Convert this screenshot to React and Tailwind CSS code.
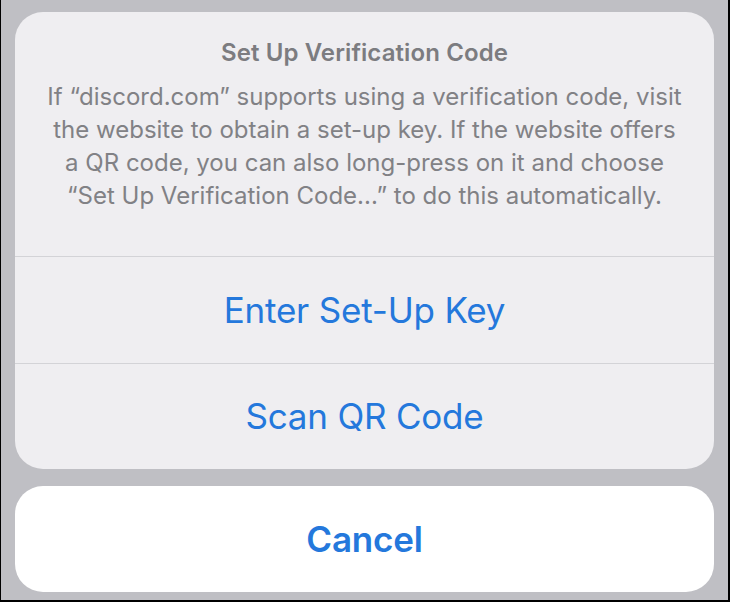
export default function App() {
  const font = { fontFamily: '"Inter", "Roboto", "Liberation Sans", sans-serif' };
  return (
    <div
      className="w-[730px] h-[602px] bg-[#bfbfc4] border-l border-r-2 border-b-2 border-black box-border pl-[14px] pr-[14px] pt-[12px] flex flex-col gap-[17px]"
      style={font}
    >
      <div className="w-[699px] bg-[#efeef1] rounded-[28px] flex flex-col overflow-hidden">
        <div className="h-[244px] flex flex-col items-center pt-[27px] px-[10px]">
          <div className="text-[24px] font-semibold text-[#7c7c80] tracking-[0.1px] leading-[28px]">
            Set Up Verification Code
          </div>
          <div className="mt-[13px] text-[24px] text-[#818185] leading-[33px] text-center whitespace-nowrap">
            <div>If “discord.com” supports using a verification code, visit</div>
            <div>the website to obtain a set-up key. If the website offers</div>
            <div>a QR code, you can also long-press on it and choose</div>
            <div>“Set Up Verification Code...” to do this automatically.</div>
          </div>
        </div>
        <div className="h-px bg-[#d3d3d7]" />
        <div className="h-[106px] flex items-center justify-center text-[35px] text-[#2478dc] tracking-[-0.2px]">
          Enter Set-Up Key
        </div>
        <div className="h-px bg-[#d3d3d7]" />
        <div className="h-[105px] flex items-center justify-center text-[35px] text-[#2478dc] tracking-[-0.2px]">
          Scan QR Code
        </div>
      </div>
      <div className="w-[699px] h-[106px] bg-white rounded-[28px] flex items-center justify-center text-[35px] font-semibold text-[#2478dc] tracking-[-0.2px]">
        Cancel
      </div>
    </div>
  );
}
